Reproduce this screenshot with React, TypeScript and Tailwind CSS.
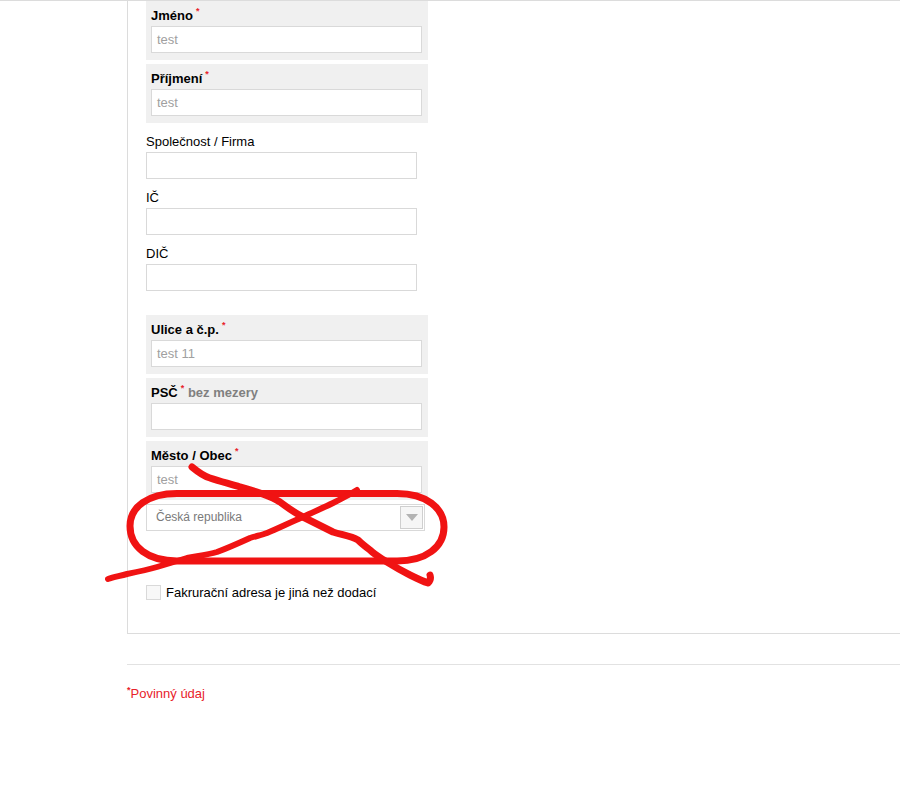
const font = { fontFamily: '"Liberation Sans", Arial, sans-serif' };

function Req() {
  return <sup className="relative -top-[4px] ml-[3px] align-baseline text-[9px] font-bold leading-none text-[#e8222a]">*</sup>;
}

function RequiredField({ label, hint, value, className }: { label: string; hint?: string; value?: string; className: string }) {
  return (
    <div className={`h-[59px] w-[282px] bg-[#f0f0f0] px-[5px] ${className}`}>
      <div className="flex h-[25px] items-center whitespace-pre pt-[3px] text-[13px] font-bold leading-none text-black">
        {label}
        <Req />
        {hint && <span className="text-[#808080]"> {hint}</span>}
      </div>
      <div className="flex h-[27px] w-[271px] items-center border border-[#d9d9d9] bg-white pl-[5px] text-[13px] text-[#a0a0a0]">
        {value}
      </div>
    </div>
  );
}

function PlainField({ label }: { label: string }) {
  return (
    <div>
      <div className="flex h-[29px] items-center pt-[9px] text-[13px] text-black">{label}</div>
      <div className="h-[27px] w-[271px] border border-[#d9d9d9] bg-white" />
    </div>
  );
}

export default function App() {
  return (
    <div style={font} className="relative h-[800px] w-[900px] overflow-hidden border-t border-[#dcdcdc] bg-white">
      <div className="ml-[127px] h-[633px] border-b border-l border-[#dcdcdc] pl-[18px]">
        <RequiredField label="Jméno" value="test" className="" />
        <RequiredField label="Příjmení" value="test" className="mt-[4px]" />
        <PlainField label="Společnost / Firma" />
        <PlainField label="IČ" />
        <PlainField label="DIČ" />
        <RequiredField label="Ulice a č.p." value="test 11" className="mt-[24px]" />
        <RequiredField label="PSČ" hint="bez mezery" className="mt-[4px]" />
        <RequiredField label="Město / Obec" value="test" className="mt-[4px]" />
        <div className="mt-[4px] flex h-[27px] w-[279px] items-center justify-between border border-[#d9d9d9] bg-white pl-[9px] pr-[1px] text-[12px] text-[#7a7a7a]">
          <span className="-mt-[2px]">Česká republika</span>
          <div className="flex h-[23px] w-[23px] items-center justify-center border border-[#cfcfcf] bg-[#f6f6f6]">
            <svg width="12" height="7" viewBox="0 0 12 7">
              <path d="M0 0h12L6 7z" fill="#b3b3b3" />
            </svg>
          </div>
        </div>
        <label className="mt-[54px] flex h-[15px] items-center gap-[5px] text-[13px] text-black">
          <span className="h-[15px] w-[15px] border border-[#d9d9d9] bg-[#f8f8f8]" />
          Fakrurační adresa je jiná než dodací
        </label>
      </div>

      <div className="ml-[127px] mt-[30px] border-t border-[#e2e2e2] pt-[20px] text-[13px] leading-[18px] text-[#e8222a]">
        <sup className="relative -top-[5px] align-baseline text-[9px] font-bold leading-none">*</sup>
        Povinný údaj
      </div>

      <svg className="absolute -top-[1px] left-0" width="900" height="800" viewBox="0 0 900 800" fill="none" stroke="#f01313" strokeLinecap="round" strokeLinejoin="round">
        <path
          d="M177 493.5 H397 C426 493.5 444 508 444 527 C444 547 426 561 397 561 H177 C148 561 130 547 130 526 C130 507 148 493.5 177 493.5 Z"
          strokeWidth="7"
        />
        <path
          d="M192 467 C198 472 203 476 210 478 C222 482 231 484 240 487 C248 489 254 491 260 493 C268 496 274 498 280 502 C288 508 295 513 303 517 C313 522 323 527 333 532 C342 535 351 536 358 540 C362 544 366 547 370 550 C375 555 381 558 387 562 C395 567 402 571 410 575 C416 578 422 581 428 583 C430 581 431 578 430 575"
          strokeWidth="7"
        />
        <path
          d="M108 579 C114 577 120 576 127 574 C137 572 147 570 157 567 C167 564 177 561 187 558 C197 556 207 555 217 552 C228 548 239 543 250 538 C256 536 262 535 267 533 C279 528 291 522 303 517 C313 512 323 508 333 503 C341 499 349 495 357 490"
          strokeWidth="6"
        />
      </svg>
    </div>
  );
}
